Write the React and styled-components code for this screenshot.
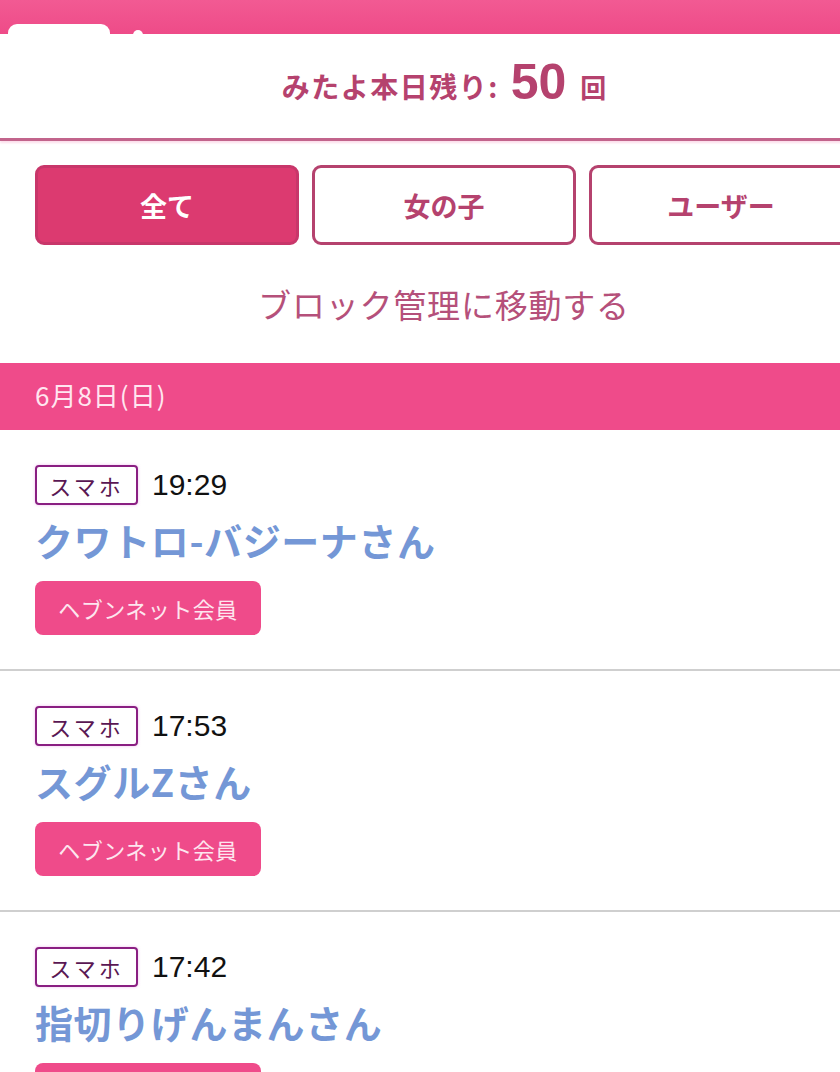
import React from "react";
import styled, { createGlobalStyle } from "styled-components";

const Global = createGlobalStyle`
  html, body { margin: 0; padding: 0; background: #fff; }
  body { font-family: "Noto Sans CJK JP", "Noto Sans", sans-serif; }
  * { box-sizing: border-box; }
`;

const Viewport = styled.div`
  width: 840px;
  overflow: hidden;
  background: #fff;
`;

const Page = styled.div`
  width: 888px;
`;

const Header = styled.div`
  position: relative;
  height: 34px;
  background: linear-gradient(#f25a93, #ee4b88);
`;

const HeaderTab = styled.div`
  position: absolute;
  left: 8px;
  top: 24px;
  width: 102px;
  height: 14px;
  background: #fff;
  border-radius: 9px 9px 0 0;
`;

const HeaderNub = styled.div`
  position: absolute;
  left: 133px;
  top: 30px;
  width: 10px;
  height: 6px;
  background: #fff;
  border-radius: 5px 5px 0 0;
`;

const Remaining = styled.div`
  height: 107px;
  display: flex;
  align-items: center;
  justify-content: center;
  color: #b5426e;
  font-weight: 700;
  border-bottom: 3px solid #c2648c;
  box-shadow: 0 2px 2px rgba(240, 120, 170, 0.25);
`;

const RemLabel = styled.span`
  font-size: 28px;
  letter-spacing: 1.5px;
`;

const RemCount = styled.span`
  font-family: "Liberation Sans", "Noto Sans", sans-serif;
  font-size: 50px;
  font-weight: 700;
  margin: -8px 14px 0 12px;
`;

const RemUnit = styled.span`
  font-size: 26px;
`;

const Tabs = styled.div`
  display: flex;
  gap: 13px;
  padding: 24px 35px 0;
`;

const Tab = styled.div`
  flex: 0 0 264px;
  height: 80px;
  border-radius: 9px;
  border: 3px solid;
  background: ${(p) => (p.$active ? "#dc3a70" : "#fff")};
  border-color: ${(p) => (p.$active ? "#c8366a" : "#b5426e")};
  color: ${(p) => (p.$active ? "#fff" : "#b5426e")};
  display: flex;
  align-items: center;
  justify-content: center;
  font-size: 27px;
  font-weight: 700;
`;

const BlockLink = styled.div`
  height: 118px;
  display: flex;
  align-items: center;
  justify-content: center;
  font-size: 33px;
  color: #b5507a;
  letter-spacing: 0.8px;
`;

const DateBar = styled.div`
  height: 67px;
  background: #ef4b8a;
  color: #ffe6f0;
  font-size: 26px;
  letter-spacing: 1px;
  display: flex;
  align-items: center;
  padding: 0 0 4px 35px;
`;

const Item = styled.div`
  padding: 35px 35px 34px;
  border-bottom: 2px solid #cfcfcf;
`;

const MetaRow = styled.div`
  display: flex;
  align-items: center;
  gap: 14px;
  height: 40px;
`;

const Device = styled.span`
  width: 103px;
  height: 40px;
  border: 2px solid #8a1f82;
  border-radius: 4px;
  display: flex;
  align-items: center;
  justify-content: center;
  font-size: 22px;
  color: #5a1753;
  letter-spacing: 3px;
  box-shadow: 0 0 3px rgba(230, 120, 230, 0.5);
`;

const Time = styled.span`
  font-family: "Liberation Sans", "Noto Sans", sans-serif;
  font-size: 30px;
  color: #111;
`;

const Name = styled.div`
  height: 76px;
  line-height: 70px;
  font-size: 38px;
  font-weight: 700;
  color: #7497d6;
  letter-spacing: 0.6px;
  white-space: nowrap;
`;

const MemberTag = styled.span`
  display: inline-flex;
  align-items: center;
  justify-content: center;
  width: 226px;
  height: 54px;
  border-radius: 8px;
  background: #ef4b8a;
  color: #fde6ef;
  font-size: 22px;
  letter-spacing: 0.5px;
  vertical-align: top;
`;

const items = [
  { time: "19:29", name: "クワトロ-バジーナさん" },
  { time: "17:53", name: "スグルZさん" },
  { time: "17:42", name: "指切りげんまんさん" },
];

export default function App() {
  return (
    <Viewport>
      <Global />
      <Page>
        <Header>
          <HeaderTab />
          <HeaderNub />
        </Header>
        <Remaining>
          <RemLabel>みたよ本日残り:</RemLabel>
          <RemCount>50</RemCount>
          <RemUnit>回</RemUnit>
        </Remaining>
        <Tabs>
          <Tab $active>全て</Tab>
          <Tab>女の子</Tab>
          <Tab>ユーザー</Tab>
        </Tabs>
        <BlockLink>ブロック管理に移動する</BlockLink>
        <DateBar>6月8日(日)</DateBar>
        {items.map((it) => (
          <Item key={it.time}>
            <MetaRow>
              <Device>スマホ</Device>
              <Time>{it.time}</Time>
            </MetaRow>
            <Name>{it.name}</Name>
            <MemberTag>ヘブンネット会員</MemberTag>
          </Item>
        ))}
      </Page>
    </Viewport>
  );
}
